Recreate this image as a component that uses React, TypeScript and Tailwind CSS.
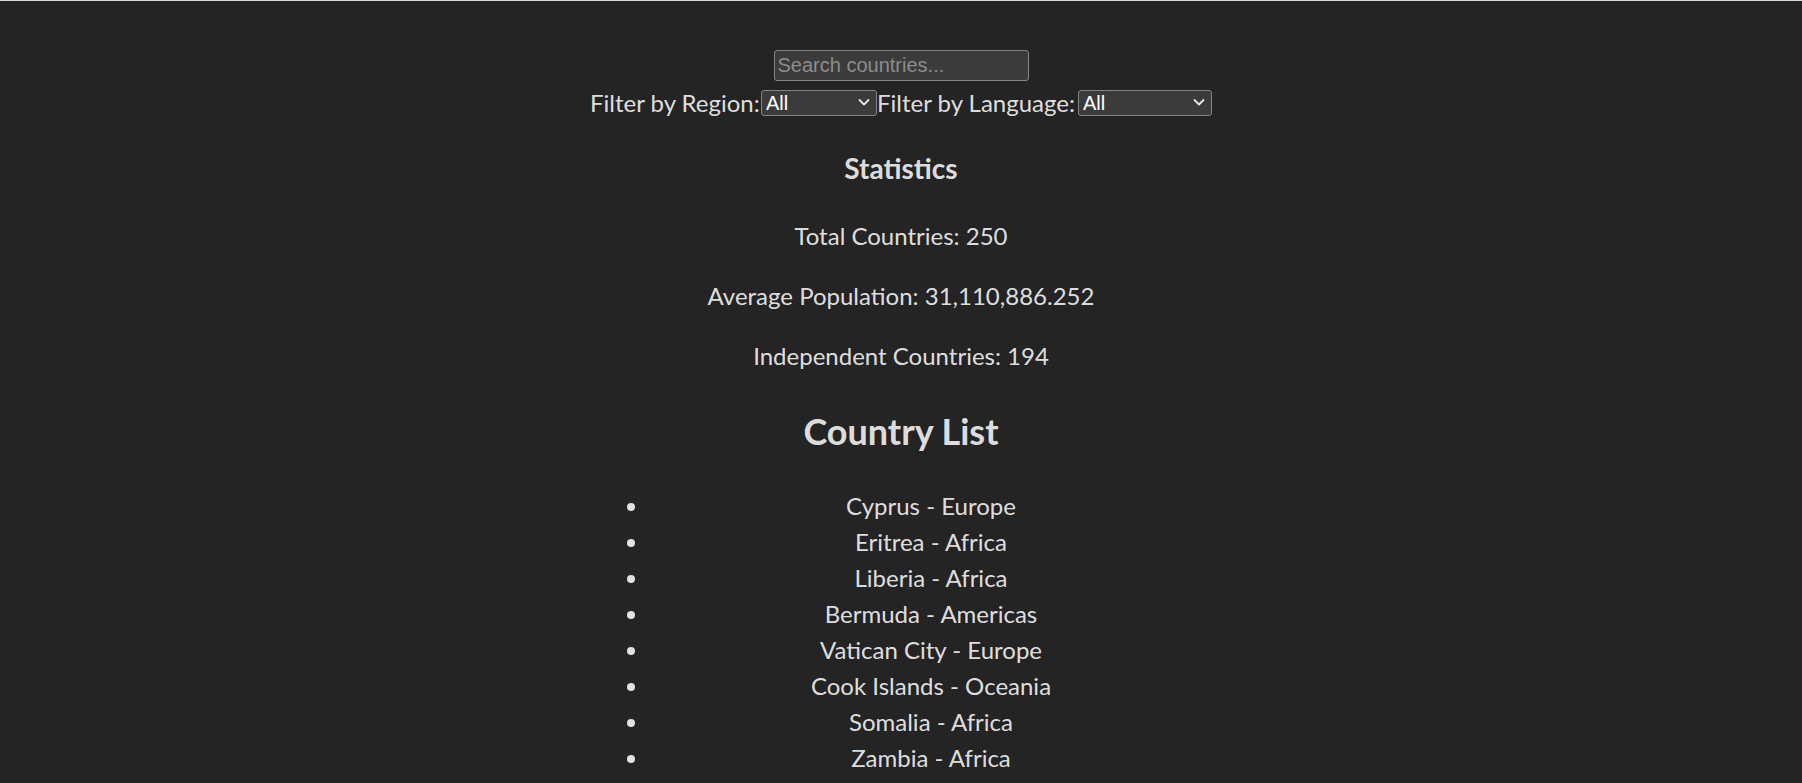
import { useState } from "react";

const countries = [
  ["Cyprus", "Europe"],
  ["Eritrea", "Africa"],
  ["Liberia", "Africa"],
  ["Bermuda", "Americas"],
  ["Vatican City", "Europe"],
  ["Cook Islands", "Oceania"],
  ["Somalia", "Africa"],
  ["Zambia", "Africa"],
];

const regions = ["All", "Africa", "Americas", "Antarctic", "Asia", "Europe", "Oceania"];
const languages = ["All", "English", "French", "Spanish", "Arabic", "Portuguese"];

function Select({ value, options, onChange, width }: { value: string; options: string[]; onChange: (v: string) => void; width: string }) {
  return (
    <span className={`relative inline-flex ${width}`}>
      <select
        className="h-[26px] w-full appearance-none rounded-[3px] border border-[#858585] bg-[#3b3b3b] pl-[4px] font-['Liberation_Sans',Arial,sans-serif] text-[20px] leading-none text-white outline-none"
        value={value}
        onChange={(e) => onChange(e.target.value)}
      >
        {options.map((o) => <option key={o}>{o}</option>)}
      </select>
      <svg className="pointer-events-none absolute top-[8px] right-[7px]" width="12" height="9" viewBox="0 0 12 9" fill="none">
        <path d="M1.5 2l4.5 4.5L10.5 2" stroke="#e8e8e8" strokeWidth="1.8" strokeLinecap="round" strokeLinejoin="round" />
      </svg>
    </span>
  );
}

export default function App() {
  const [search, setSearch] = useState("");
  const [region, setRegion] = useState("All");
  const [language, setLanguage] = useState("All");

  const visible = countries.filter(([name, r]) => name.toLowerCase().includes(search.toLowerCase()) && (region === "All" || r === region));

  return (
    <div className="min-h-screen border-t border-[#dcdcdc] bg-[#242424] font-['Lato',sans-serif] text-[24px] leading-[1.5] text-white/[0.87] scheme-dark">
      <div className="mx-auto w-fit px-12 pt-12 text-center">
        <div className="flex h-9 items-start justify-center pt-px">
          <input
            className="h-[31px] w-[255px] rounded-[3px] border border-[#858585] bg-[#3b3b3b] px-[3px] font-['Liberation_Sans',Arial,sans-serif] text-[20px] text-white outline-none placeholder:text-[#8d8d8d]"
            placeholder="Search countries..."
            value={search}
            onChange={(e) => setSearch(e.target.value)}
          />
        </div>
        <div className="flex h-9 w-[622px] items-center">
          <label className="w-[171px] whitespace-nowrap text-left">Filter by Region:</label>
          <Select value={region} options={regions} onChange={setRegion} width="w-[116px]" />
          <label className="w-[201px] whitespace-nowrap text-left">Filter by Language:</label>
          <Select value={language} options={languages} onChange={setLanguage} width="w-[134px]" />
        </div>

        <h3 className="mt-[26px] mb-[29px] text-[28px] font-bold">Statistics</h3>
        <p>Total Countries: 250</p>
        <p className="mt-6">Average Population: 31,110,886.252</p>
        <p className="mt-6">Independent Countries: 194</p>

        <h2 className="mt-[30px] mb-[30px] text-[36px] font-bold leading-[1.5]">Country List</h2>
        <ul className="list-disc pl-[60px]">
          {visible.map(([name, r]) => (
            <li key={name}>{name} - {r}</li>
          ))}
        </ul>
      </div>
    </div>
  );
}
